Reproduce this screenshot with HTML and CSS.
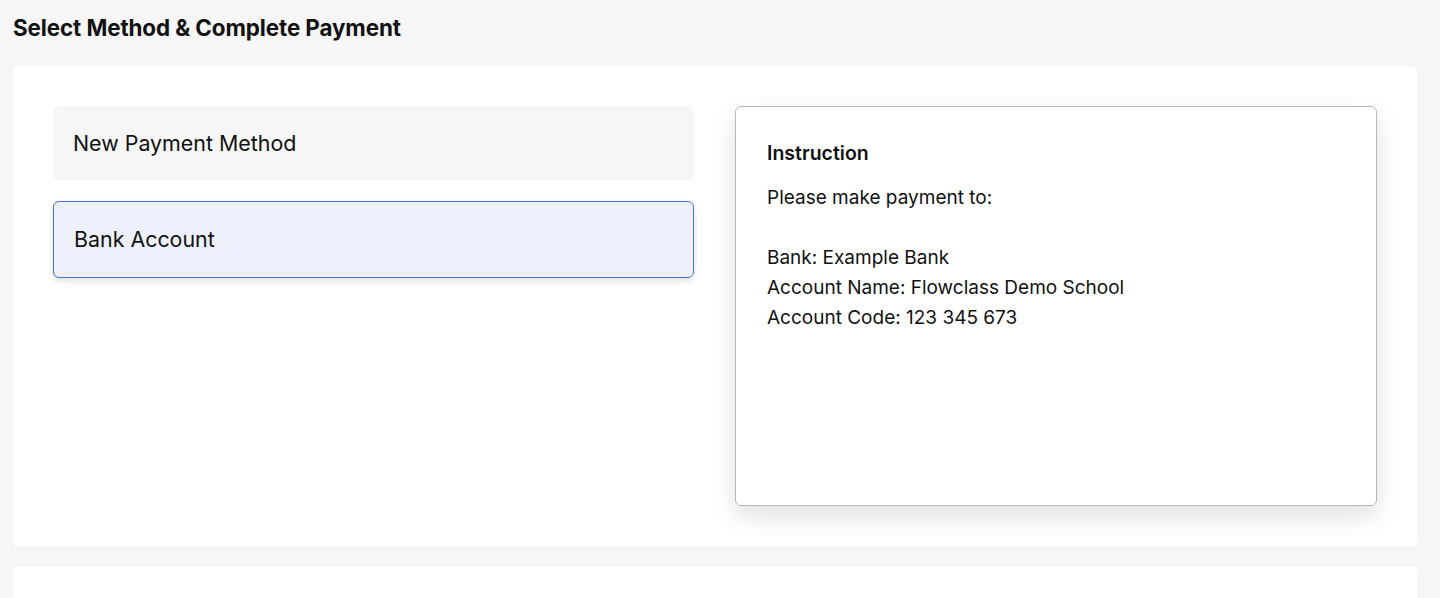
FILE: index.html
```html
<!DOCTYPE html>
<html lang="en">

<head>
    <meta charset="UTF-8">
    <meta name="viewport" content="width=device-width, initial-scale=1.0">
    <title>Complete Payment</title>
    <link rel="stylesheet" href="styles.css">
</head>

<body>
    <h1 class="page-title">Select Method &amp; Complete Payment</h1>

    <section class="card">
        <div class="methods">
            <div class="method">New Payment Method</div>
            <div class="method selected">Bank Account</div>
        </div>

        <div class="instruction">
            <h2>Instruction</h2>
            <p>Please make payment to:</p>
            <p class="details">
                Bank: Example Bank<br>
                Account Name: Flowclass Demo School<br>
                Account Code: 123 345 673
            </p>
        </div>
    </section>

    <section class="card card-next"></section>
</body>

</html>
```

FILE: styles.css
```css
* {
    margin: 0;
    padding: 0;
    box-sizing: border-box;
}

body {
    font-family: 'Inter', 'Roboto', sans-serif;
    background-color: #f6f6f6;
    color: #111;
    padding: 0 23px 0 13px;
    overflow: hidden;
}

.page-title {
    font-size: 22.4px;
    font-weight: 700;
    line-height: 26px;
    padding: 15px 0 25px;
    letter-spacing: -0.1px;
}

.card {
    background-color: #fff;
    border-radius: 4px;
    padding: 40px;
    display: grid;
    grid-template-columns: 641px 1fr;
    gap: 41px;
}

.card-next {
    margin-top: 21px;
    height: 31px;
    border-radius: 4px 4px 0 0;
}

.methods {
    display: flex;
    flex-direction: column;
    gap: 21px;
}

.method {
    background-color: #f6f6f6;
    border: 1px solid transparent;
    border-radius: 6px;
    height: 74px;
    padding: 0 19px;
    display: flex;
    align-items: center;
    font-size: 21.4px;
    cursor: pointer;
}

.method.selected {
    background-color: #eef1fb;
    border-color: #3d76d6;
    height: 77px;
    padding: 0 20px 2px;
    box-shadow: 0 3px 6px rgba(0, 0, 0, 0.12);
}

.instruction {
    height: 400px;
    border: 1px solid #b9b9b9;
    border-radius: 6px;
    padding: 33px 30px 33px 31px;
    box-shadow: 0 10px 24px rgba(0, 0, 0, 0.12);
    font-size: 19px;
    line-height: 30px;
}

.instruction h2 {
    font-size: 19.5px;
    font-weight: 600;
    line-height: 26px;
    margin-bottom: 17px;
}

.details {
    margin-top: 30px;
}
```
